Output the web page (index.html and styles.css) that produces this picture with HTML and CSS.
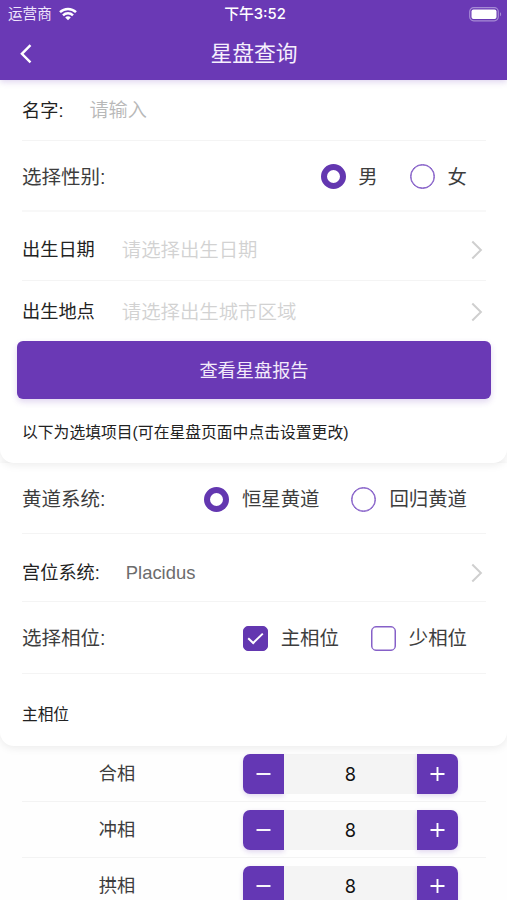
FILE: index.html
```
<!DOCTYPE html>
<html lang="zh-CN">
<head>
<meta charset="utf-8">
<meta name="viewport" content="width=device-width">
<title>星盘查询</title>
<link rel="stylesheet" href="styles.css">
</head>
<body>
<header class="header">
  <div class="status">
    <div class="carrier"><span>运营商</span>
      <svg width="18" height="14" viewBox="0 0 18 14" fill="none" stroke="#fff" stroke-width="2.5"><path d="M1 5.2C5.5.9 12.5.9 17 5.2M4 8.3c2.8-2.7 7.2-2.7 10 0"/><path d="M6.2 10.4c1.6-1.5 4-1.5 5.6 0L9 13.2z" fill="#fff" stroke="none"/></svg>
    </div>
    <div class="clock">下午3:52</div>
    <svg class="battery" width="33" height="15" viewBox="0 0 33 15"><rect x=".7" y=".7" width="28.6" height="13.1" rx="4" fill="none" stroke="#a68bd5" stroke-width="1.2"/><rect x="2.5" y="2.5" width="25" height="9.5" rx="2" fill="#fff"/><path d="M31 5.2c1.5.7 1.5 3.4 0 4.1z" fill="#a68bd5"/></svg>
  </div>
  <nav class="nav">
    <svg class="back" width="14" height="20" viewBox="0 0 14 20" fill="none" stroke="#fff" stroke-width="2.4"><path d="M11.5 1.2 2.9 9.8l8.6 8.6"/></svg>
    <h1>星盘查询</h1>
    <span></span>
  </nav>
</header>
<main>
  <section class="card primary">
    <div class="row name"><label class="field">名字:</label><span class="hint name-hint">请输入</span></div>
    <div class="row gender"><span class="label">选择性别:</span>
      <div class="options"><span class="option"><i class="radio on"></i>男</span><span class="option"><i class="radio"></i>女</span></div>
    </div>
    <div class="row date"><span class="field">出生日期</span><span class="hint">请选择出生日期</span><svg class="chevron" width="12" height="20" viewBox="0 0 12 20"><path d="m1.3 1.5 8.6 8.5-8.6 8.5"/></svg></div>
    <div class="row place"><span class="field">出生地点</span><span class="hint">请选择出生城市区域</span><svg class="chevron" width="12" height="20" viewBox="0 0 12 20"><path d="m1.3 1.5 8.6 8.5-8.6 8.5"/></svg></div>
    <button class="submit">查看星盘报告</button>
    <p class="note">以下为选填项目(可在星盘页面中点击设置更改)</p>
  </section>
  <section class="card optional">
    <div class="row zodiac"><span class="label">黄道系统:</span>
      <div class="options"><span class="option"><i class="radio on"></i>恒星黄道</span><span class="option"><i class="radio"></i>回归黄道</span></div>
    </div>
    <div class="row house"><span class="field">宫位系统:</span><span class="value">Placidus</span><svg class="chevron" width="12" height="20" viewBox="0 0 12 20"><path d="m1.3 1.5 8.6 8.5-8.6 8.5"/></svg></div>
    <div class="row aspects"><span class="label">选择相位:</span>
      <div class="options"><span class="option"><i class="check on"><svg width="17" height="13" viewBox="0 0 17 13"><path d="m1.2 6.2 5 4.8L15.8 1.6"/></svg></i>主相位</span><span class="option"><i class="check"></i>少相位</span></div>
    </div>
    <h2 class="subtitle">主相位</h2>
  </section>
  <section class="orbs">
    <div class="orb"><span class="orb-name">合相</span><div class="stepper"><button class="minus"><svg width="16" height="16" viewBox="0 0 16 16"><path d="M.5 8h14"/></svg></button><span class="count">8</span><button class="plus"><svg width="16" height="16" viewBox="0 0 16 16"><path d="M.5 8h14M7.5 1v14"/></svg></button></div></div>
    <div class="orb"><span class="orb-name">冲相</span><div class="stepper"><button class="minus"><svg width="16" height="16" viewBox="0 0 16 16"><path d="M.5 8h14"/></svg></button><span class="count">8</span><button class="plus"><svg width="16" height="16" viewBox="0 0 16 16"><path d="M.5 8h14M7.5 1v14"/></svg></button></div></div>
    <div class="orb"><span class="orb-name">拱相</span><div class="stepper"><button class="minus"><svg width="16" height="16" viewBox="0 0 16 16"><path d="M.5 8h14"/></svg></button><span class="count">8</span><button class="plus"><svg width="16" height="16" viewBox="0 0 16 16"><path d="M.5 8h14M7.5 1v14"/></svg></button></div></div>
  </section>
</main>
</body>
</html>
```
FILE: styles.css
```
* { box-sizing: border-box; }
body {
  margin: 0;
  height: 900px;
  overflow: hidden;
  background: #fefefe;
  color: #3d3d3d;
  font-family: "Liberation Sans", "Noto Sans CJK SC", sans-serif;
}
svg { display: block; flex: none; }
button { border: 0; padding: 0; font-family: inherit; }
.header {
  position: relative;
  z-index: 3;
  height: 80px;
  background: #6a39b5;
  color: #fff;
  box-shadow: 0 2px 6px rgba(106, 57, 181, .22);
}
.status {
  display: grid;
  grid-template-columns: 1fr auto 1fr;
  align-items: center;
  height: 27px;
  padding: 0 5px 0 8px;
  font-size: 14.6px;
  line-height: 27px;
}
.carrier { display: flex; align-items: center; gap: 7px; color: #efe5fc; }
.carrier span { padding-top: 1px; }
.clock { font-family: Inter, "Noto Sans CJK SC", sans-serif; font-weight: 500; font-size: 14.8px; }
.battery { justify-self: end; }
.nav {
  display: grid;
  grid-template-columns: 1fr auto 1fr;
  align-items: center;
  height: 53px;
  padding: 0 19px;
}
.nav h1 { margin: 0; padding-left: 1px; font-size: 21.8px; font-weight: 400; line-height: 53px; color: #f6effd; }
.card {
  position: relative;
  background: #fff;
  border-radius: 0 0 14px 14px;
  box-shadow: 0 2px 9px rgba(0, 0, 0, .08);
}
.primary { z-index: 2; height: 383px; }
.optional { z-index: 1; height: 283px; }
.row {
  display: flex;
  align-items: center;
  margin: 0 21px 0 22px;
  border-bottom: 1px solid #f4f4f4;
  white-space: nowrap;
  line-height: 28px;
}
.name { height: 61px; padding-top: 2px; }
.gender { height: 71px; padding-top: 2px; border-bottom-width: 2px; border-color: #f8f8f8; }
.date { height: 69px; padding-top: 8px; }
.place { height: 60px; padding-top: 1px; border: 0; }
.zodiac { height: 71px; padding-top: 2px; }
.house { height: 68px; padding-top: 10px; }
.aspects { height: 72px; padding-top: 1px; }
.field { font-size: 18.2px; color: #222; }
.label { font-size: 19.5px; }
.hint { margin-left: 27px; font-size: 19.4px; font-weight: 350; color: #d2d2d2; }
.name-hint { margin-left: 26px; font-size: 19.2px; color: #b8b8b8; }
.value { margin-left: 26px; font-size: 18.4px; color: #6c6c6c; }
.chevron { margin: 0 3px 0 auto; fill: none; stroke: #cfcfcf; stroke-width: 2; }
.options { display: flex; gap: 32px; margin: 0 19px 0 auto; font-size: 19.4px; }
.option { display: flex; align-items: center; gap: 13px; }
.gender .option:first-child { gap: 12px; }
.radio { width: 25px; height: 25px; border: 1px solid #7c53c4; border-radius: 50%; box-shadow: inset 0 0 0 .5px #7c53c4; }
.radio.on { border: 6px solid #6337b0; box-shadow: none; }
.check { display: grid; place-items: center; width: 25px; height: 25px; border: 1px solid #8660c8; border-radius: 5px; box-shadow: inset 0 0 0 .5px #8660c8; }
.check.on { background: #6337b0; border-color: #6337b0; box-shadow: none; }
.check svg { fill: none; stroke: #fff; stroke-width: 2; }
.submit {
  display: block;
  width: 474px;
  height: 58px;
  margin: 0 auto 0 17px;
  padding-bottom: 2px;
  border-radius: 6px;
  background: #6a39b5;
  color: #f2eafa;
  font-size: 18.2px;
  box-shadow: 0 3px 6px rgba(106, 57, 181, .2);
}
.note, .subtitle { margin: 0; padding-left: 22px; font-size: 15.7px; font-weight: 400; line-height: 24px; color: #222; white-space: nowrap; }
.note { padding-top: 22px; font-size: 15.8px; }
.subtitle { padding-top: 29px; }
.orb {
  display: flex;
  align-items: center;
  height: 56px;
  margin: 0 21px 0 22px;
  border-bottom: 1px solid #f3f3f3;
}
.orb-name { width: 190px; font-size: 18.2px; text-align: center; line-height: 26px; }
.stepper { display: flex; height: 40px; margin: 0 0 0 31px; }
.stepper button { display: grid; place-items: center; width: 41px; height: 40px; background: #6437b4; box-shadow: 0 2px 5px rgba(106, 57, 181, .2); }
.stepper button svg { fill: none; stroke: #fff; stroke-width: 1.9; }
.stepper .minus { border-radius: 7px 0 0 7px; }
.stepper .plus { border-radius: 0 7px 7px 0; }
.count { width: 133px; background: #f4f4f4; color: #111; text-align: center; font: 18.2px/40px Inter, sans-serif; }
```
